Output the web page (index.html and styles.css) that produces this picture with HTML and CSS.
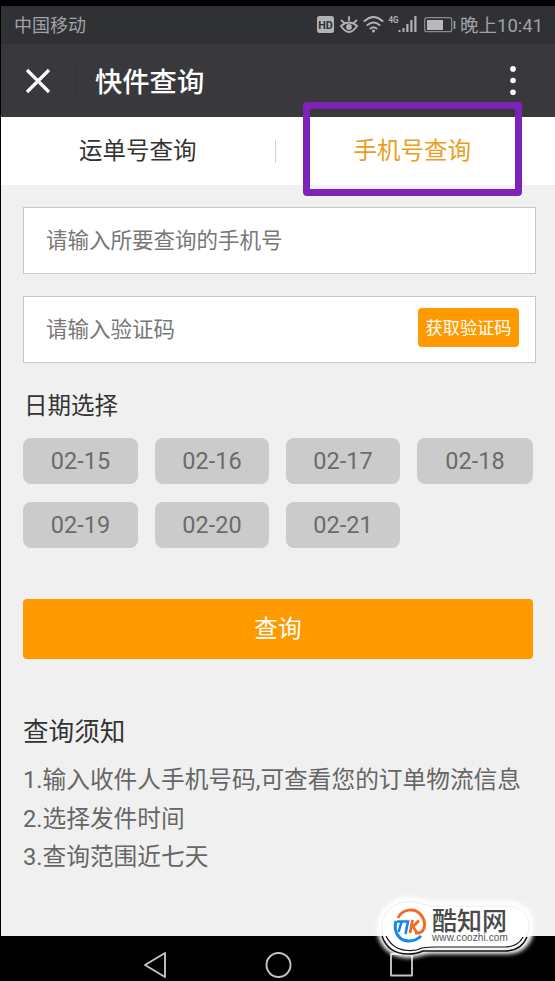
FILE: index.html
```html
<!DOCTYPE html>
<html lang="zh-CN">
<head>
<meta charset="utf-8">
<title>快件查询</title>
<link rel="stylesheet" href="styles.css">
</head>
<body>
<div class="phone">
  <div class="status">
    <span class="carrier">中国移动</span>
    <svg class="status-icons" width="142" height="24" viewBox="316 13 142 24">
      <rect x="317" y="16" width="17" height="17" rx="2.500" fill="#b2b2b4"/>
      <text x="318.300" y="28.500" class="hd" textLength="14.500" lengthAdjust="spacingAndGlyphs">HD</text>
      <g fill="none" stroke="#b2b2b4" stroke-width="1.900" stroke-linecap="round">
        <path d="M341 26q8-7 16 0q-8 12-16 0zM341.500 20.500l3 2.500M349 17v3M356.500 20.500l-3 2.500"/>
        <path d="M364.500 21q9-8 18 0M367.500 25q6-5 12 0M370.500 28.500q3-2.500 6 0" stroke-width="2"/>
      </g>
      <circle cx="349" cy="27" r="2.900" fill="#b2b2b4"/>
      <circle cx="373.500" cy="31" r="1.600" fill="#b2b2b4"/>
      <text x="388.500" y="23" class="net" textLength="10" lengthAdjust="spacingAndGlyphs">4G</text>
      <path d="M398.500 30h2v2h-2zM402.500 28h2v4h-2zM406.300 24h2.200v8h-2.200zM410.300 20h2.200v12h-2.200zM414.300 16h2.200v16h-2.200z" fill="#b2b2b4"/>
      <rect x="424.700" y="17.700" width="27" height="14" rx="2" fill="none" stroke="#8c8c8f" stroke-width="1.200"/>
      <path d="M427 20h16v10h-16z" fill="#b9b9bb"/>
      <path d="M453.700 21h1.600v8h-1.600z" fill="#a5a5a7"/>
    </svg>
    <span class="clock">晚上10:41</span>
  </div>
  <header class="bar">
    <svg class="close" width="26" height="26" viewBox="0 0 26 26"><path d="M2 2l22 22M24 2L2 24" stroke="#fff" stroke-width="3.200"/></svg>
    <i class="bar-line"></i>
    <h1>快件查询</h1>
    <svg width="8" height="30" viewBox="0 0 8 30" fill="#fff"><circle cx="4" cy="2.900" r="2.800"/><circle cx="4" cy="14.500" r="2.800"/><circle cx="4" cy="26.200" r="2.800"/></svg>
  </header>
  <nav class="tabs">
    <a class="tab">运单号查询</a>
    <i class="tab-line"></i>
    <a class="tab active">手机号查询</a>
    <span class="mark"></span>
  </nav>
  <main>
    <div class="field">请输入所要查询的手机号</div>
    <div class="field">请输入验证码<button class="code">获取验证码</button></div>
    <h2 class="date-title">日期选择</h2>
    <div class="dates">
      <span>02-15</span><span>02-16</span><span>02-17</span><span>02-18</span>
      <span>02-19</span><span>02-20</span><span>02-21</span>
    </div>
    <button class="submit">查询</button>
    <h2 class="note-title">查询须知</h2>
    <p>1.输入收件人手机号码,可查看您的订单物流信息</p>
    <p>2.选择发件时间</p>
    <p>3.查询范围近七天</p>
  </main>
</div>
<footer class="navkeys">
  <svg width="555" height="45" viewBox="0 936 555 45" fill="none" stroke="#c4c4c4" stroke-width="1.900" stroke-linejoin="round">
    <path d="M145 965L165 953V977Z"/><circle cx="278.500" cy="965" r="12"/><path d="M391 954h21v21.500h-21z"/>
  </svg>
</footer>
<div class="watermark">
  <svg class="plate" width="185" height="101" viewBox="370 880 185 101">
    <defs>
      <filter id="soft" x="-10%" y="-20%" width="120%" height="140%"><feGaussianBlur stdDeviation="2.200"/></filter>
      <path id="shape" d="M405 902C415 900 422 905 432 906H507C522 906 529 915 529 926C529 940 521 949 507 949H432C420 949 417 953 408 953C391 953 382 941 382 928C382 914 391 904 405 902Z"/>
    </defs>
    <use href="#shape" fill="#fff" stroke="#fff" stroke-width="10" filter="url(#soft)"/>
    <use href="#shape" fill="#fff" stroke="#ededed" stroke-width="1"/>
    <g fill="none" stroke="#111">
      <path d="M382 936Q388 954 408 954Q417 954 423 951Q428 951 436 951H505Q521 951 527 937" stroke-width="1.500"/>
      <path d="M386 936Q393 950 408 950.500Q416 951 422 948Q428 947 436 947H505Q518 947 523 937" stroke-width="1.200"/>
    </g>
    <g fill="none">
      <path d="M398 918C402 909 415 907 421 915C427 923 425 931 419 933H415" stroke="#f36b24" stroke-width="3"/>
      <path d="M396 921C393 932 399 941 409 941C414 941 418 939 421 936" stroke="#1685ed" stroke-width="3"/>
      <path d="M397 921.500H408L405.500 934M401.500 922L398.500 932" stroke="#1685ed" stroke-width="2.600"/>
      <path d="M412.500 920L410 933M419 920.500L413 926.500L417 933" stroke="#f36b24" stroke-width="2.800"/>
    </g>
  </svg>
  <div class="brand"><b>酷知网</b><small>www.coozhi.com</small></div>
</div>
</body>
</html>
```
FILE: styles.css
```css
* { box-sizing: border-box; }
body {
  margin: 0;
  width: 555px;
  height: 981px;
  position: relative;
  overflow: hidden;
  background: #000;
  font-family: Roboto, "Noto Sans CJK SC", sans-serif;
}
h1, h2, p { margin: 0; font-weight: 400; }
button { border: 0; padding: 0; font-family: inherit; color: #fff; background: #ff9900; }
.phone { height: 936px; padding: 6px 0 0 1px; }
.status {
  height: 38px;
  padding: 0 12px 0 13px;
  display: flex;
  align-items: center;
  background: #303135;
  color: #a2a2a5;
  font-size: 18px;
  line-height: 38px;
}
.carrier, .clock { padding-top: 2px; }
.status-icons { margin-left: auto; }
.clock { margin-left: 2px; width: 83px; white-space: nowrap; font-size: 18.5px; }
.hd { font: bold 11px Roboto; fill: #303135; }
.net { font: bold 9px Roboto; fill: #b2b2b4; }
.bar {
  height: 73px;
  padding: 0 38px 0 24px;
  display: flex;
  align-items: center;
  background: #39393d;
  color: #fff;
}
.bar-line { width: 1px; height: 34px; margin: 0 19px 0 24px; background: #303034; }
.bar h1 { flex: 1; padding-top: 4px; font-size: 27.3px; line-height: 40px; font-weight: 500; }
.tabs { position: relative; height: 68px; padding-right: 6px; display: flex; align-items: center; background: #fff; }
.tab { flex: 1; text-align: center; font-size: 23.5px; line-height: 36px; color: #333; }
.tab.active { color: #eb9d20; }
.tab-line { width: 1px; height: 23px; background: #d2d2d2; }
.mark {
  position: absolute;
  left: 302px;
  top: -15px;
  width: 219px;
  height: 94px;
  border: 7px solid #7e22b8;
  border-radius: 4px;
}
main { height: 751px; padding: 22px 22px 0; background: #f0f0f0; }
.field {
  height: 67px;
  width: 513px;
  margin-bottom: 22px;
  padding: 0 16px 5px 22px;
  display: flex;
  align-items: center;
  justify-content: space-between;
  background: #fff;
  border: 1.500px solid #c8c8c8;
  color: #777;
  font-size: 21.5px;
}
.code { width: 101px; height: 39px; border-radius: 4px; font-size: 17.2px; line-height: 39px; padding-top: 1px; }
.date-title { font-size: 23.5px; line-height: 36px; color: #333; margin: 0 0 14px 1px; padding-top: 3px; }
.dates { display: grid; grid-template-columns: 115px 114px 114px 116px; grid-auto-rows: 46px; gap: 18px 17px; }
.dates span { border-radius: 8px; background: #cbcbcb; color: #6b6b6b; font-size: 23.5px; line-height: 46px; text-align: center; }
.submit { display: block; width: 510px; height: 60px; margin-top: 51px; padding-bottom: 4px; border-radius: 4px; font-size: 23.7px; }
.note-title { font-size: 25.6px; line-height: 38px; color: #333; margin: 54px 0 10px 0; }
p { font-size: 23.7px; line-height: 38.5px; color: #666; white-space: nowrap; }
.navkeys { height: 45px; }
.navkeys svg { display: block; }
.watermark { position: absolute; left: 370px; top: 880px; width: 185px; height: 101px; }
.plate { position: absolute; left: 0; top: 0; }
.brand { position: absolute; left: 62px; top: 31px; display: flex; flex-direction: column; color: #4a4a4a; }
.brand b { font-size: 25px; line-height: 22px; font-weight: 500; }
.brand small { font: 10px/10px "Liberation Sans", sans-serif; letter-spacing: .1px; color: #555; }
```
